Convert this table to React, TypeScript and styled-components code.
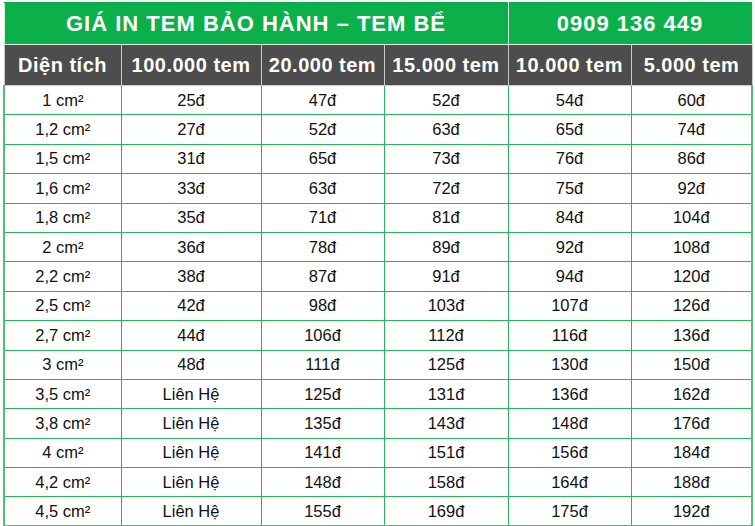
import React from 'react'
import styled, { createGlobalStyle } from 'styled-components'

const GlobalStyle = createGlobalStyle`
  html, body {
    margin: 0;
    padding: 0;
    background: #ffffff;
  }
  body {
    font-family: "Liberation Sans", Arial, Helvetica, sans-serif;
  }
`

const Page = styled.div`
  width: 755px;
  height: 526px;
  padding: 2px 0 0 3px;
  box-sizing: border-box;
  overflow: hidden;
`

const Table = styled.table`
  border-collapse: collapse;
  table-layout: fixed;
  width: 748px;
`

const TitleCell = styled.th`
  height: 41px;
  padding: 0;
  background: #0cb04a;
  color: #ffffff;
  font-size: 22px;
  font-weight: 700;
  letter-spacing: 1px;
  text-align: center;
  border: 1px solid #d9efe0;
  border-top-color: #0cb04a;
`

const HeadCell = styled.th`
  height: 40px;
  padding: 0;
  background: #4d4d4d;
  color: #ffffff;
  font-size: 20px;
  font-weight: 700;
  letter-spacing: 0.5px;
  text-align: center;
  white-space: nowrap;
  border: 1px solid #c9c9c9;
`

const Row = styled.tr`
  height: 29.4px;
`

const Cell = styled.td`
  padding: 0;
  color: #111111;
  font-size: 16.5px;
  text-align: center;
  border: 1.5px solid #28b55b;
  &:first-child {
    border-left: 2px solid #4fc072;
  }
  &:last-child {
    border-right: 2px solid #4fc072;
  }
`

const Body = styled.tbody`
  tr:last-child td {
    border-bottom: 2px solid #4fc072;
  }
`

const widths = [117, 140, 123, 124, 123, 121]
const heads = ['Diện tích', '100.000 tem', '20.000 tem', '15.000 tem', '10.000 tem', '5.000 tem']

const rows: string[][] = [
  ['1 cm²', '25đ', '47đ', '52đ', '54đ', '60đ'],
  ['1,2 cm²', '27đ', '52đ', '63đ', '65đ', '74đ'],
  ['1,5 cm²', '31đ', '65đ', '73đ', '76đ', '86đ'],
  ['1,6 cm²', '33đ', '63đ', '72đ', '75đ', '92đ'],
  ['1,8 cm²', '35đ', '71đ', '81đ', '84đ', '104đ'],
  ['2 cm²', '36đ', '78đ', '89đ', '92đ', '108đ'],
  ['2,2 cm²', '38đ', '87đ', '91đ', '94đ', '120đ'],
  ['2,5 cm²', '42đ', '98đ', '103đ', '107đ', '126đ'],
  ['2,7 cm²', '44đ', '106đ', '112đ', '116đ', '136đ'],
  ['3 cm²', '48đ', '111đ', '125đ', '130đ', '150đ'],
  ['3,5 cm²', 'Liên Hệ', '125đ', '131đ', '136đ', '162đ'],
  ['3,8 cm²', 'Liên Hệ', '135đ', '143đ', '148đ', '176đ'],
  ['4 cm²', 'Liên Hệ', '141đ', '151đ', '156đ', '184đ'],
  ['4,2 cm²', 'Liên Hệ', '148đ', '158đ', '164đ', '188đ'],
  ['4,5 cm²', 'Liên Hệ', '155đ', '169đ', '175đ', '192đ'],
]

export default function App() {
  return (
    <Page>
      <GlobalStyle />
      <Table>
        <colgroup>
          {widths.map((w, i) => (
            <col key={i} style={{ width: w }} />
          ))}
        </colgroup>
        <thead>
          <tr>
            <TitleCell colSpan={4}>GIÁ IN TEM BẢO HÀNH – TEM BỂ</TitleCell>
            <TitleCell colSpan={2}>0909 136 449</TitleCell>
          </tr>
          <tr>
            {heads.map(h => (
              <HeadCell key={h}>{h}</HeadCell>
            ))}
          </tr>
        </thead>
        <Body>
          {rows.map(r => (
            <Row key={r[0]}>
              {r.map((c, i) => (
                <Cell key={i}>{c}</Cell>
              ))}
            </Row>
          ))}
        </Body>
      </Table>
    </Page>
  )
}
